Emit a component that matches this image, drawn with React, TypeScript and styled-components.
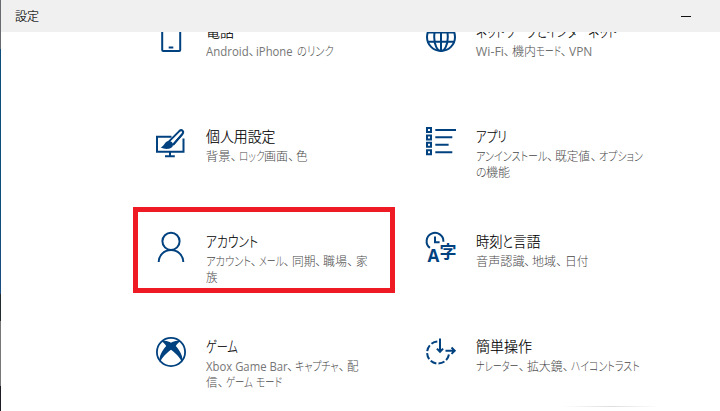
import React, { useLayoutEffect, useRef, useState } from 'react';
import styled, { createGlobalStyle } from 'styled-components';

const NAVY = '#00417f';

const GlobalStyle = createGlobalStyle`
  * { box-sizing: border-box; }
  html, body { margin: 0; padding: 0; overflow: hidden; background: #fff; }
  body { font-family: "Open Sans", "Noto Sans CJK JP", sans-serif; }
`;

const Desktop = styled.div`
  display: flex;
  width: 720px;
  height: 411px;
  overflow: hidden;
  background: linear-gradient(#686a70 0 49px, #0d4f7b 49px 200px, #1b4d80 294px, #222b2e 294px 321px, #777 321px 386px, #1d1c25 386px);
`;

const Window = styled.div`
  display: flex;
  flex-direction: column;
  width: 719px;
  margin-left: 1px;
  background: #fff;
`;

const TitleBar = styled.header`
  flex: none;
  display: flex;
  align-items: center;
  justify-content: space-between;
  height: 32px;
  padding: 1px 29px 0 14px;
  background: #f0f0f0;
`;

const Minimize = styled.span`
  width: 10px;
  height: 1px;
  background: #111;
`;

const Viewport = styled.main`
  flex: 1;
  min-height: 0;
  overflow: hidden;
`;

const Grid = styled.div`
  display: grid;
  grid-template-columns: 270px 270px;
  grid-auto-rows: 105px;
  margin: -36px 0 0 132px;
`;

const Tile = styled.section<{ $marked?: boolean }>`
  display: flex;
  align-items: flex-start;
  width: 262px;
  height: 86px;
  margin-top: 1px;
  padding: ${p => (p.$marked ? '20px 0 0 18px' : '25px 0 0 23px')};
  border: ${p => (p.$marked ? '5px solid #ee1b24' : 'none')};
`;

const Icon = styled.svg`
  flex: none;
  width: 30px;
  height: 30px;
  overflow: visible;
  fill: none;
  stroke: ${NAVY};
  stroke-width: 2;
`;

const Copy = styled.div`
  padding-left: 19.7px;
`;

const Line = styled.div<{ $kind: 'title' | 'desc' | 'caption' }>`
  display: flex;
  height: ${p => (p.$kind === 'title' ? 20 : 16)}px;
  line-height: ${p => (p.$kind === 'title' ? 20 : 16)}px;
  margin-bottom: ${p => (p.$kind === 'title' ? 2 : 0)}px;
  font-size: ${p => (p.$kind === 'title' ? 14.5 : 12.5)}px;
  font-weight: 300;
  color: ${p => (p.$kind === 'desc' ? '#484848' : '#000')};
  -webkit-text-stroke: ${p => (p.$kind === 'desc' ? '0' : '0.15px #000')};
  white-space: pre;
`;

const Slot = styled.span<{ $latin: boolean }>`
  flex: none;
  display: block;
  height: 100%;
  ${p => p.$latin && 'font-weight: 400; color: #767676;'}
`;

const Glyphs = styled.span`
  display: inline-block;
  vertical-align: top;
  transform-origin: 0 50%;
  font-feature-settings: "palt";
`;

const Shadow = styled.div`
  position: absolute;
  left: 562px;
  top: 406px;
  width: 98px;
  height: 1px;
  background: linear-gradient(90deg, transparent, #dedede 50%, transparent);
`;

// [text, width in px]; a comma keeps its natural shape inside its slot
type Piece = [string, number];

function Run({ text, width }: { text: string; width: number }) {
  const ref = useRef<HTMLSpanElement>(null);
  const [scale, setScale] = useState(1);
  useLayoutEffect(() => {
    if (ref.current && text.trim() && text !== '、') setScale(width / ref.current.offsetWidth);
  }, [text, width]);
  return (
    <Slot $latin={/^[A-Z]|^i/.test(text)} style={{ width }}>
      <Glyphs ref={ref} style={{ transform: `scaleX(${scale})` }}>{text}</Glyphs>
    </Slot>
  );
}

function TextLine({ kind, pieces }: { kind: 'title' | 'desc' | 'caption'; pieces: Piece[] }) {
  return (
    <Line $kind={kind}>
      {pieces.map(([text, width], i) => <Run key={i} text={text} width={width} />)}
    </Line>
  );
}

const PhoneIcon = () => (
  <Icon viewBox="0 0 30 30">
    <rect x="6.2" y="1" width="18" height="28" rx="1" />
    <path d="M12.7 25.5h4.6" />
  </Icon>
);

const GlobeIcon = () => (
  <Icon viewBox="0 0 30 30">
    <circle cx="15" cy="15" r="14" />
    <ellipse cx="15" cy="15" rx="6.8" ry="14" />
    <path d="M2 10.5h26M2 19.8h26M15 1v28" />
  </Icon>
);

const BrushIcon = () => (
  <Icon viewBox="0 0 30 30">
    <path d="M15.5 9.7H1v15h26.500V11.500M14 25v4M9 29.200h9.800" />
    <path d="M12.800 14.600L23.300 4.100c2.500-2.300 5 .2 3.200 2.700L17 17.800" />
    <path d="M15.800 15.800L24.800 6" stroke="#fff" strokeWidth="1.300" />
    <path d="M12.600 14c-4.200.2-3.600 5-8 6.300 5 3 12.600 1.800 12.400-2.800-.1-2.200-2-3.600-4.400-3.500z" fill={NAVY} stroke="none" />
    <path d="M17 17.800L26.500 6.800" />
  </Icon>
);

const ListIcon = () => (
  <Icon viewBox="0 0 30 30">
    <path d="M1 1h4v4H1zM1 8.400h4v4H1zM1 15.800h4v4H1zM1 23.300h4v4H1z" />
    <path d="M9.300 3H30M9.300 10.300h17M9.300 17.800h13.300M9.300 25.300h17" />
  </Icon>
);

const PersonIcon = () => (
  <Icon viewBox="0 0 30 30">
    <circle cx="15" cy="9.300" r="8.600" />
    <path d="M2.700 30c.3-7 5.600-12 12.300-12s12 5 12.300 12" />
  </Icon>
);

const IconLetter = styled.text`
  fill: ${NAVY};
  stroke: none;
  font-weight: 700;
`;

const TimeIcon = () => (
  <Icon viewBox="0 0 30 30">
    <path d="M3.900 15.900A8.400 8.400 0 1 1 17.400 9.800M9 4.500v5.800h4.600" />
    <IconLetter x="1.5" y="29.6" fontSize="17" textLength="11.8" lengthAdjust="spacingAndGlyphs">A</IconLetter>
    <IconLetter x="13.5" y="26.3" fontSize="17">字</IconLetter>
  </Icon>
);

const XboxIcon = () => (
  <Icon viewBox="0 0 30 30">
    <circle cx="15" cy="15" r="14.1" strokeWidth="1.8" />
    <path
      fill={NAVY}
      stroke="none"
      d="M5.500 4.300C9.300 2.800 12.600 4.300 15 5.700c2.400-1.400 5.700-2.900 9.500-1.400 -1.600.8-3.500 2.900-4.700 4.600 4.200 4.600 7.600 10.400 6.400 16.500 -2-4.600-6.700-9.400-11.200-12.700 -4.500 3.300-9.200 8.100-11.200 12.700 -1.200-6.100 2.200-11.900 6.400-16.500C9 7.200 7.100 5.100 5.500 4.300z"
    />
  </Icon>
);

const EaseIcon = () => (
  <Icon viewBox="0 0 30 30">
    <path d="M11.300 4.600A11 11 0 1 0 23 17" strokeDasharray="6.300 2.200" />
    <path d="M14 1.500v12.500M10.900 11.600l3.100 3.200 3.100-3.200M19.500 13.700h9M25.500 10.500l3.200 3.200-3.200 3.200" />
  </Icon>
);

interface Category {
  icon: () => React.ReactElement;
  title: Piece[];
  desc: Piece[][];
  marked?: boolean;
}

const categories: Category[] = [
  { icon: PhoneIcon, title: [['電話', 28]], desc: [[['Android', 43], ['、', 7.5], ['iPhone', 37], ['', 3.5], ['のリンク', 37]]] },
  { icon: GlobeIcon, title: [['ネットワークとインターネット', 141.5]], desc: [[['Wi-Fi', 28], ['、', 8], ['機内', 24], ['モード', 25], ['、', 8.5], ['VPN', 23]]] },
  { icon: BrushIcon, title: [['個人用設定', 70]], desc: [[['背景', 25], ['、', 8], ['ロック', 25.5], ['画面', 24], ['、', 8], ['色', 12]]] },
  {
    icon: ListIcon,
    title: [['アプリ', 31]],
    desc: [
      [['アンインストール', 71.5], ['、', 8], ['既定値', 35.5], ['、', 8.5], ['オプション', 44]],
      [['の', 10.5], ['機能', 24]],
    ],
  },
  {
    icon: PersonIcon,
    marked: true,
    title: [['アカウント', 52]],
    desc: [
      [['アカウント', 45], ['、', 8], ['メール', 25], ['、', 8], ['同期', 23.5], ['、', 8], ['職場', 24], ['、', 8.5], ['家', 12]],
      [['族', 12]],
    ],
  },
  { icon: TimeIcon, title: [['時刻', 26.5], ['と', 11], ['言語', 27.5]], desc: [[['音声認識', 48.5], ['、', 8], ['地域', 24], ['、', 8.5], ['日付', 23.5]]] },
  {
    icon: XboxIcon,
    title: [['ゲーム', 31.5]],
    desc: [
      [['Xbox Game Bar', 81.5], ['、', 8], ['キャプチャ', 43.5], ['、', 8], ['配', 12]],
      [['信', 12], ['、', 8], ['ゲーム', 27], ['', 3], ['モード', 26]],
    ],
  },
  { icon: EaseIcon, title: [['簡単操作', 56]], desc: [[['ナレーター', 43], ['、', 8], ['拡大鏡', 36], ['、', 8], ['ハイコントラスト', 69]]] },
];

export default function App() {
  return (
    <>
      <GlobalStyle />
      <Desktop>
        <Window>
          <TitleBar>
            <TextLine kind="caption" pieces={[['設定', 24]]} />
            <Minimize />
          </TitleBar>
          <Viewport>
            <Grid>
              {categories.map(({ icon: Glyph, title, desc, marked }, i) => (
                <Tile key={i} $marked={marked}>
                  <Glyph />
                  <Copy>
                    <TextLine kind="title" pieces={title} />
                    {desc.map((line, j) => <TextLine key={j} kind="desc" pieces={line} />)}
                  </Copy>
                </Tile>
              ))}
            </Grid>
          </Viewport>
          <Shadow />
        </Window>
      </Desktop>
    </>
  );
}
